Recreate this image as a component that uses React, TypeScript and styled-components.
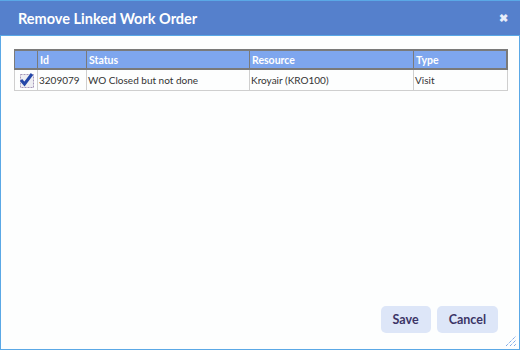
import React from "react";
import styled, {createGlobalStyle} from "styled-components";

interface Row {
    id: string;
    status: string;
    resource: string;
    type: string;
    checked: boolean;
}

const rows: Row[] = [
    {id: "3209079", status: "WO Closed but not done", resource: "Kroyair (KRO100)", type: "Visit", checked: true},
];

function CheckIcon() {
    return (
        <svg width="15" height="15" viewBox="0 0 15 15">
            <rect x="1.5" y="1.5" width="13" height="13" fill="#eeeef2" stroke="#a597b9" strokeDasharray="2 1"/>
            <path d="M2 7 L5.5 11 L13 1" fill="none" stroke="#2447a8" strokeWidth="3"/>
        </svg>
    );
}

function Grip() {
    return (
        <svg width="12" height="12" viewBox="0 0 12 12">
            <path d="M1 11 L11 1 M5 11 L11 5 M9 11 L11 9" stroke="#4a86e0" strokeWidth="1" strokeDasharray="1 1"/>
        </svg>
    );
}

export default function App() {
    return (
        <>
            <GlobalStyle/>
            <Dialog>
                <TitleBar>
                    <Title>Remove Linked Work Order</Title>
                    <Close>✖</Close>
                </TitleBar>
                <Body>
                    <Table>
                        <colgroup>
                            <col style={{width: 23}}/>
                            <col style={{width: 49}}/>
                            <col style={{width: 163}}/>
                            <col style={{width: 164}}/>
                            <col/>
                        </colgroup>
                        <thead>
                        <tr>
                            <Th/>
                            <Th>Id</Th>
                            <Th>Status</Th>
                            <Th>Resource</Th>
                            <Th>Type</Th>
                        </tr>
                        </thead>
                        <tbody>
                        {rows.map(r => (
                            <tr key={r.id}>
                                <Td $center>{r.checked && <CheckIcon/>}</Td>
                                <Td>{r.id}</Td>
                                <Td>{r.status}</Td>
                                <Td>{r.resource}</Td>
                                <Td>{r.type}</Td>
                            </tr>
                        ))}
                        </tbody>
                    </Table>
                </Body>
                <Footer>
                    <Button>Save</Button>
                    <Button>Cancel</Button>
                </Footer>
                <Resize><Grip/></Resize>
            </Dialog>
        </>
    );
}

const GlobalStyle = createGlobalStyle`
  html, body {
    margin: 0;
    padding: 0;
    background: #fdfefe;
  }
`;

const Dialog = styled.div`
  position: relative;
  width: 520px;
  height: 350px;
  box-sizing: border-box;
  border: 1px solid #5aa8e6;
  border-top: 0;
  background: #fdfefe;
  display: flex;
  flex-direction: column;
  font-family: Lato, "Liberation Sans", sans-serif;
`;

const TitleBar = styled.div`
  height: 36px;
  box-sizing: border-box;
  background: #5580cc;
  border-top: 1px solid #5aa8e6;
  border-bottom: 1px solid #5aa8e6;
  margin: 0 -1px;
  padding: 0 12px 0 18px;
  display: flex;
  align-items: center;
  justify-content: space-between;
`;

const Title = styled.div`
  color: #fff;
  font-size: 14.5px;
  font-weight: bold;
`;

const Close = styled.div`
  color: #e8eefa;
  font-size: 11px;
  font-weight: bold;
`;

const Body = styled.div`
  flex: 1;
  padding: 13px 12px 0 13px;
`;

const Table = styled.table`
  width: 494px;
  border-collapse: collapse;
  table-layout: fixed;
  font-size: 10px;
`;

const Th = styled.th`
  height: 17px;
  padding: 0 0 0 2px;
  text-align: left;
  background: #7ea6ee;
  color: #fff;
  font-weight: bold;
  font-size: 10.5px;
  border-top: 2px solid #7a7a7a;
  border-bottom: 2px solid #7a7a7a;
  border-left: 1px solid #7a7a7a;
  &:last-child {
    border-right: 2px solid #7a7a7a;
  }
`;

const Td = styled.td<{ $center?: boolean }>`
  height: 20px;
  padding: 0 0 0 ${p => p.$center ? 0 : 1}px;
  text-align: ${p => p.$center ? "center" : "left"};
  color: #333;
  border: 1px solid #cfcfcf;
  vertical-align: middle;
  svg {
    display: block;
    margin: 1px auto 0;
  }
`;

const Footer = styled.div`
  display: flex;
  justify-content: flex-end;
  gap: 6px;
  padding: 0 21px 16px 0;
`;

const Button = styled.button`
  height: 27px;
  padding: 0 12px;
  border: 0;
  border-radius: 5px;
  background: #dde6f8;
  color: #3b3466;
  font-family: Lato, "Liberation Sans", sans-serif;
  font-size: 12.5px;
  font-weight: bold;
`;

const Resize = styled.div`
  position: absolute;
  right: 2px;
  bottom: 2px;
  line-height: 0;
`;
